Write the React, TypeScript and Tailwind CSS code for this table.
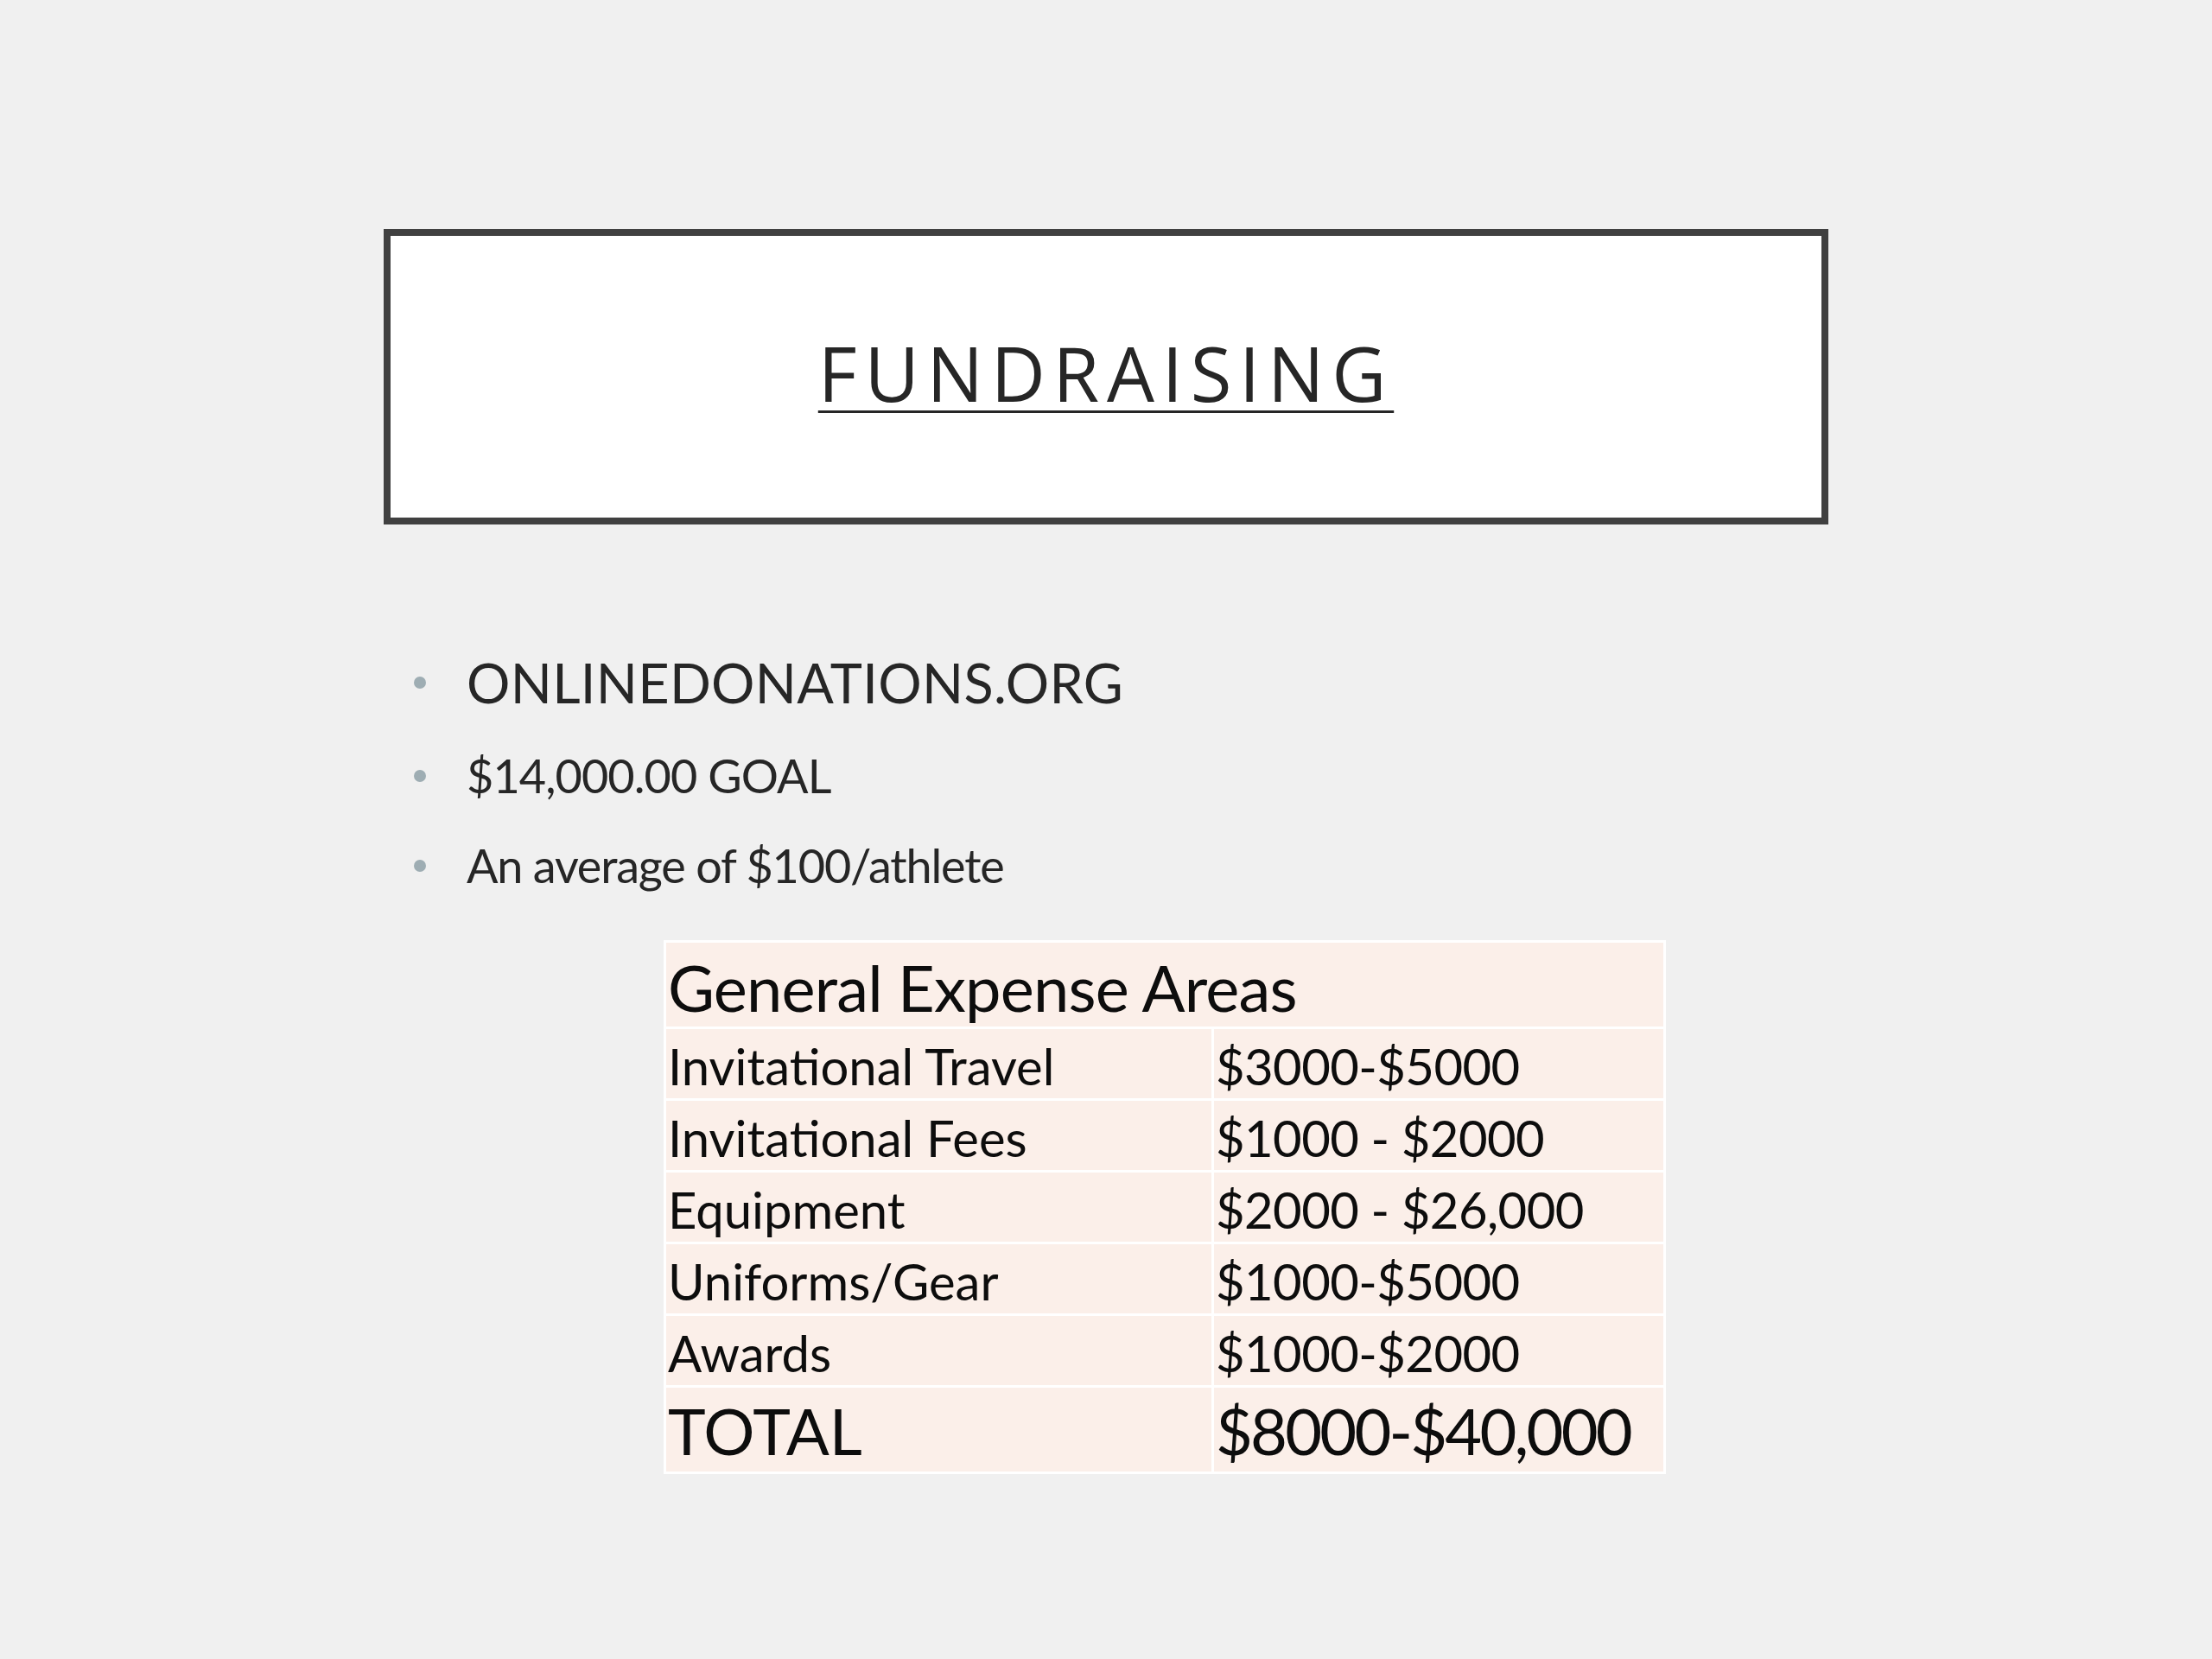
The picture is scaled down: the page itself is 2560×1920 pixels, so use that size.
const bullets = [
  { text: 'ONLINEDONATIONS.ORG', size: 'text-[63px] tracking-[0.005em]' },
  { text: '$14,000.00 GOAL', size: 'text-[54px] tracking-[-0.017em]' },
  { text: 'An average of $100/athlete', size: 'text-[54px] tracking-[-0.022em]' },
]

const expenses = [
  ['Invitational Travel', '$3000-$5000'],
  ['Invitational Fees', '$1000 - $2000'],
  ['Equipment', '$2000 - $26,000'],
  ['Uniforms/Gear', '$1000-$5000'],
  ['Awards', '$1000-$2000'],
]

export default function App() {
  return (
    <div className="min-h-[1920px] w-full bg-[#f0f0f0] pt-[265px] font-['Lato','Liberation_Sans',sans-serif]">
      {/* Title */}
      <div className="mx-auto flex h-[342px] w-[1672px] items-center justify-center border-[8px] border-[#404040] bg-white pb-[10px]">
        <h1 className="font-['Open_Sans','Liberation_Sans',sans-serif] text-[87px] leading-none tracking-[0.1em] text-[#262626] underline decoration-[3px] underline-offset-[10px]">
          FUNDRAISING
        </h1>
      </div>

      {/* Bullets */}
      <ul className="mt-[151px] flex flex-col gap-[50px] pl-[479px]">
        {bullets.map((b) => (
          <li key={b.text} className={`flex items-center gap-[47px] leading-none text-[#262626] ${b.size}`}>
            <span className="h-[14px] w-[14px] shrink-0 rounded-full bg-[#9eadb3]" />
            <span>{b.text}</span>
          </li>
        ))}
      </ul>

      {/* Expense table */}
      <table className="ml-[768px] mt-[59px] w-[1160px] border-collapse bg-[#fbefe9] text-[#0d0d0d]">
        <tbody>
          <tr className="h-[100px]">
            <td colSpan={2} className="border-[3px] border-white pl-[2px] pb-[8px] align-bottom text-[74px] leading-none tracking-[-0.011em]">
              General Expense Areas
            </td>
          </tr>
          {expenses.map(([label, amount]) => (
            <tr key={label} className="h-[83px]">
              <td className="w-[634px] border-[3px] border-white pl-[2px] pb-[8px] align-bottom text-[58px] leading-none">
                {label}
              </td>
              <td className="border-[3px] border-white pl-[2px] pb-[8px] align-bottom text-[58px] leading-none tracking-[-0.01em]">
                {amount}
              </td>
            </tr>
          ))}
          <tr className="h-[100px]">
            <td className="border-[3px] border-white pl-[2px] pb-[10px] align-bottom text-[74px] leading-none">TOTAL</td>
            <td className="border-[3px] border-white pl-[2px] pb-[10px] align-bottom text-[74px] leading-none tracking-[-0.038em]">
              $8000-$40,000
            </td>
          </tr>
        </tbody>
      </table>
    </div>
  )
}
